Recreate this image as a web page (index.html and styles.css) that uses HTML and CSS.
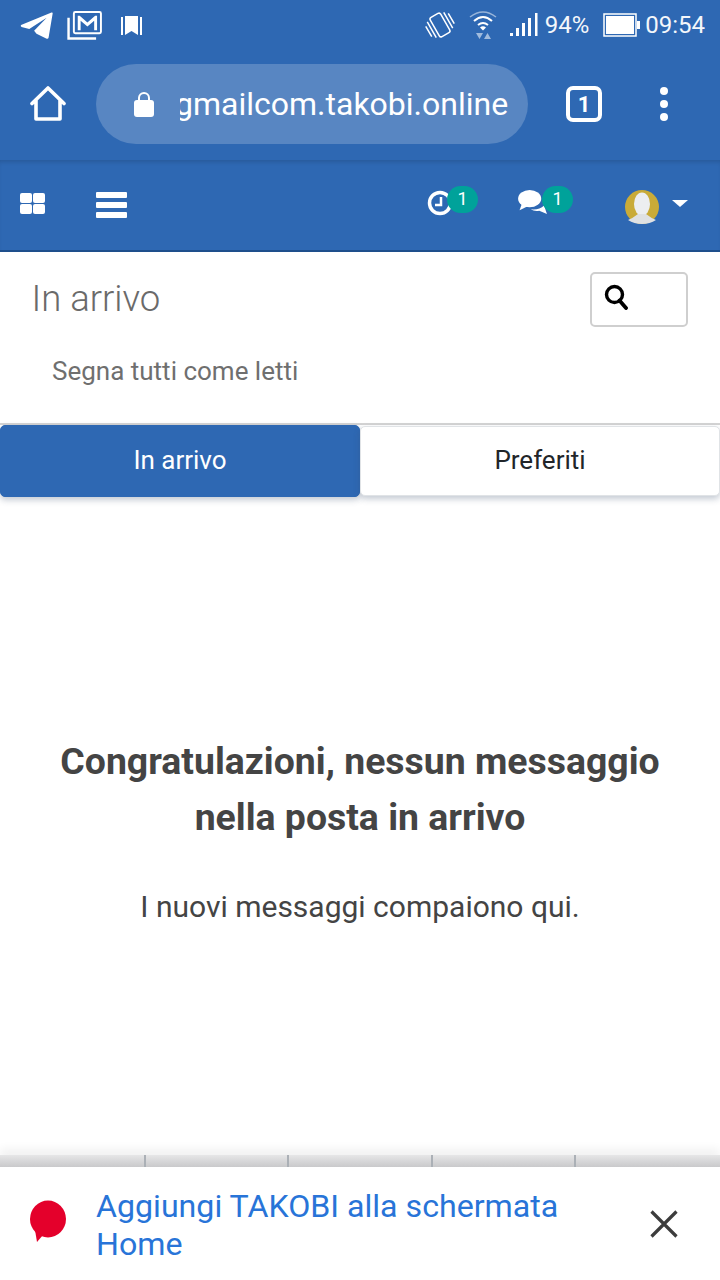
FILE: index.html
```html
<!DOCTYPE html>
<html lang="it">
<head>
<meta charset="utf-8">
<title>In arrivo</title>
<link rel="stylesheet" href="styles.css">
</head>
<body>
<div class="page">
  <header class="chrome">
    <div class="status">
      <div class="status-left">
        <svg class="ic-tg" viewBox="0 0 34 30"><path d="M0.5 14.500 L32 1.500 Q33.500 1.200 33.200 2.500 L29 27.500 Q28.500 29.500 26.500 28.500 L16.500 23.500 L14 20.500 L27 7 L9 18.500 L1 16.500 Q-0.500 15.500 0.500 14.500Z" fill="#fff"/></svg>
        <svg class="ic-gm" viewBox="0 0 36 30"><rect x="7" y="1" width="28" height="22" rx="1.500" fill="none" stroke="#fff" stroke-width="2"/><path d="M11 20V5h2l8 7 8-7h2v15h-3V10l-7 6-7-6v10z" fill="#fff"/><path d="M1.500 7v21.500H30" fill="none" stroke="#fff" stroke-width="2.500"/></svg>
        <svg class="ic-bk" viewBox="0 0 21 21"><path d="M0 2h2v18H0zM19 2h2v18h-2zM4 1h13v19l-6.500-4L4 20z" fill="#fff"/></svg>
      </div>
      <div class="status-right">
        <svg class="ic-vib" viewBox="0 0 32 30"><g fill="none" stroke="#fff" stroke-width="1.500" transform="rotate(-30 16 15)"><rect x="10" y="4" width="12" height="22" rx="2"/><path d="M6.500 6v18M3 9v12M25.500 6v18M29 9v12"/></g></svg>
        <svg class="ic-wifi" viewBox="0 0 28 30"><g fill="none" stroke="#fff"><path d="M1 7Q14-3 27 7" opacity=".5" stroke-width="1.500"/><path d="M5 11Q14 3 23 11" stroke-width="2"/><path d="M9 15Q14 11 19 15" stroke-width="2"/></g><path d="M11 17.500Q14 15 17 17.500L14 20.500z" fill="#fff"/><path d="M7 23h7l-3.500 6zM15 29l3.500-6 3.500 6z" fill="#fff" opacity=".55"/></svg>
        <svg class="ic-sig" viewBox="0 0 28 24"><path d="M0 20h3v3H0zM6 15h3v8H6zM12 10h3v13h-3zM18 5h3v18h-3zM25 0h2.500v23H25z" fill="#fff"/></svg>
        <span class="status-text pct">94%</span>
        <svg class="ic-bat" viewBox="0 0 38 24"><rect x="1" y="1" width="32" height="22" fill="none" stroke="#fff" stroke-width="1.500"/><rect x="3" y="3" width="28" height="18" fill="#fff"/><rect x="34" y="8" width="3" height="8" fill="#fff"/></svg>
        <span class="status-text">09:54</span>
      </div>
    </div>
    <div class="toolbar">
      <svg class="ic-home" viewBox="0 0 36 36"><path d="M2 17.500 18 2l16 15.500M6 14v19h24V14" fill="none" stroke="#fff" stroke-width="3.600" stroke-linejoin="round" stroke-linecap="round"/></svg>
      <div class="url">
        <svg class="ic-lock" viewBox="0 0 20 26"><path d="M5 11V7a5 5 0 0 1 10 0v4" fill="none" stroke="#fff" stroke-width="2"/><rect y="9" width="20" height="17" rx="3" fill="#fff"/></svg>
        <div class="url-clip"><span class="url-text">gmailcom.takobi.online</span></div>
      </div>
      <div class="tabcount">1</div>
      <div class="dots"><i></i><i></i><i></i></div>
    </div>
  </header>

  <nav class="nav">
    <div class="apps"><i></i><i></i><i></i><i></i></div>
    <div class="burger"><i></i><i></i><i></i></div>
    <div class="nav-right">
      <div class="nav-item clock">
        <svg class="ic-clock" viewBox="0 0 26 26"><circle cx="13" cy="13" r="10.500" fill="none" stroke="#fff" stroke-width="3.500"/><path d="M14 7v8H8" fill="none" stroke="#fff" stroke-width="2.500"/></svg>
        <span class="badge">1</span>
      </div>
      <div class="nav-item chat">
        <svg class="ic-chat" viewBox="0 0 32 26"><ellipse cx="12" cy="9" rx="12" ry="9" fill="#fff"/><path d="M4 14 1.500 21 10 17z" fill="#fff"/><path d="M13 20Q22 21 27 16L30 25 22 21.500Q17 22.500 13 20z" fill="#fff"/></svg>
        <span class="badge">1</span>
      </div>
      <div class="avatar">
        <svg viewBox="0 0 34 34"><circle cx="17" cy="17" r="17" fill="#c9ab38"/><ellipse cx="17" cy="14" rx="8" ry="11.500" fill="#eceef0"/><path d="M3 30Q8 28 13 24h8q5 4 10 6-6 4-14 4T3 30z" fill="#dfe1e3"/></svg>
      </div>
      <span class="caret"></span>
    </div>
  </nav>

  <section class="head">
    <div class="head-row">
      <h1 class="title">In arrivo</h1>
      <div class="search">
        <svg viewBox="0 0 24 26"><circle cx="10.500" cy="10.500" r="8" fill="none" stroke="#000" stroke-width="3.400"/><path d="M15.500 16.500 22 24" stroke="#000" stroke-width="3.800" stroke-linecap="round"/></svg>
      </div>
    </div>
    <div class="mark">Segna tutti come letti</div>
  </section>

  <div class="tabs">
    <div class="tab active">In arrivo</div>
    <div class="tab">Preferiti</div>
  </div>

  <main class="empty">
    <h2 class="empty-title">Congratulazioni, nessun messaggio<br>nella posta in arrivo</h2>
    <p class="empty-text">I nuovi messaggi compaiono qui.</p>
  </main>

  <div class="strip"><i></i><i></i><i></i><i></i><i></i></div>
  <aside class="banner">
    <svg class="ic-bubble" viewBox="0 0 36 50"><ellipse cx="18" cy="19" rx="18" ry="18.500" fill="#e4002b"/><path d="M5 30 7 42 13 35z" fill="#e4002b"/></svg>
    <div class="banner-text">Aggiungi TAKOBI alla schermata Home</div>
    <svg class="ic-x" viewBox="0 0 28 28"><path d="M1.500 1.500l25 25M26.500 1.500l-25 25" stroke="#3c3c3c" stroke-width="3.200"/></svg>
  </aside>
</div>
</body>
</html>
```
FILE: styles.css
```css
* { box-sizing: border-box; }
html, body { margin: 0; padding: 0; background: #fff; }
body { font-family: Roboto, "Liberation Sans", sans-serif; }
svg { display: block; flex: none; }
.page { width: 720px; height: 1280px; display: flex; flex-direction: column; overflow: hidden; }

.chrome { background: #2e68b3; height: 160px; display: flex; flex-direction: column; flex: none; }
.status { height: 48px; padding: 2px 15px 0 20px; display: flex; justify-content: space-between; align-items: center; }
.status-left, .status-right { display: flex; align-items: center; }
.ic-tg { width: 34px; height: 29px; }
.ic-gm { width: 35px; height: 29px; margin-left: 13px; }
.ic-bk { width: 21px; height: 21px; margin-left: 19px; }
.ic-vib { width: 32px; height: 30px; }
.ic-wifi { width: 28px; height: 30px; margin-left: 13px; }
.ic-sig { width: 28px; height: 24px; margin-left: 13px; }
.status-text { color: #fff; font-size: 24px; line-height: 30px; opacity: .95; }
.pct { margin-left: 7px; }
.ic-bat { width: 38px; height: 24px; margin: 0 4px 0 14px; }

.toolbar { height: 112px; display: flex; align-items: center; }
.ic-home { width: 36px; height: 36px; margin-left: 30px; }
.url { width: 432px; height: 80px; margin-left: 30px; background: #5886c2; border-radius: 40px; display: flex; align-items: center; padding-left: 38px; overflow: hidden; }
.ic-lock { width: 20px; height: 26px; }
.url-clip { margin-left: 26px; width: 340px; overflow: hidden; display: flex; }
.url-text { color: #fff; font-size: 32px; line-height: 40px; margin-left: -5px; white-space: nowrap; }
.tabcount { width: 36px; height: 36px; margin-left: 38px; border: 4px solid #fff; border-radius: 7px; color: #fff; font-size: 22px; font-weight: 700; display: flex; align-items: center; justify-content: center; }
.dots { display: flex; flex-direction: column; gap: 5px; margin-left: 58px; }
.dots i { width: 8px; height: 8px; background: #fff; border-radius: 50%; display: block; }

.nav { height: 92px; flex: none; background: #2e68b3; border-bottom: 2px solid #1e4f8c; box-shadow: inset 0 4px 4px -2px rgba(0,0,0,.14); display: flex; align-items: center; padding: 0 32px 0 20px; }
.apps { display: grid; grid-template-columns: 12px 12px; grid-auto-rows: 10px; gap: 1px; width: 25px; margin-bottom: 4px; }
.apps i { background: #fff; border-radius: 2px; display: block; }
.burger { display: flex; flex-direction: column; gap: 4px; margin-left: 51px; }
.burger i { display: block; width: 31px; height: 6px; background: #fff; border-radius: 1px; }
.nav-right { margin-left: auto; display: flex; align-items: center; }
.nav-item { position: relative; }
.ic-clock { width: 26px; height: 26px; }
.ic-chat { width: 31px; height: 25px; }
.badge { position: absolute; top: -4px; left: 20px; width: 31px; height: 27px; border-radius: 14px; background: #00a29a; color: #fff; font-size: 18px; line-height: 25px; text-align: center; }
.chat .badge { left: 24px; }
.clock { margin: 0 65px 4px 0; }
.chat { margin: 0 76px 6px 0; }
.avatar { width: 34px; height: 34px; margin-top: 4px; }
.avatar svg { width: 34px; height: 34px; }
.caret { margin-left: 13px; margin-top: -4px; width: 0; height: 0; border-left: 8px solid transparent; border-right: 8px solid transparent; border-top: 7px solid #fff; }

.head { height: 173px; flex: none; border-bottom: 2px solid #d4d4d4; }
.head-row { display: flex; justify-content: space-between; padding: 20px 32px 0 31.500px; }
.title { margin: 6px 0 0; font-size: 36.500px; line-height: 42px; font-weight: 300; color: #6a6a6a; }
.search { width: 98px; height: 55px; border: 2px solid #cfcfcf; border-radius: 5px; padding: 10px 0 0 12px; }
.search svg { width: 24px; height: 26px; }
.mark { margin: 28px 0 0 52px; font-size: 26px; line-height: 32px; color: #6f6f6f; }

.tabs { display: flex; height: 73px; flex: none; }
.tab { width: 360px; height: 70px; margin-top: 1px; padding-bottom: 3px; display: flex; align-items: center; justify-content: center; font-size: 26px; color: #212529; background: #fff; border-radius: 5px; border: 1px solid #e0e3e6; box-shadow: 0 3px 6px rgba(60,80,110,.3); }
.tab.active { background: #2e68b3; border-color: #2e68b3; color: #fff; margin-top: 0; height: 72px; }

.empty { flex: 1; text-align: center; padding-top: 235px; }
.empty-title { margin: 0; font-size: 37.400px; line-height: 56px; font-weight: 700; color: #444; }
.empty-text { margin: 44px 0 0; font-size: 30px; line-height: 36px; color: #444; }

.strip { height: 12px; flex: none; display: flex; background: linear-gradient(#e6e6e7, #c9c9cb); box-shadow: 0 -6px 10px rgba(0,0,0,.06); padding-left: 2px; }
.strip i { display: block; width: 144px; height: 12px; border-right: 2px solid #abb0b6; }
.strip i:last-child { border: 0; }
.banner { height: 113px; flex: none; background: #fff; display: flex; align-items: center; }
.ic-bubble { width: 36px; height: 50px; margin: 2px 0 0 30px; }
.banner-text { width: 510px; margin: 2px 0 0 30px; color: #2874d8; font-size: 32.150px; line-height: 38px; }
.ic-x { width: 28px; height: 28px; margin-left: 44px; }
```
